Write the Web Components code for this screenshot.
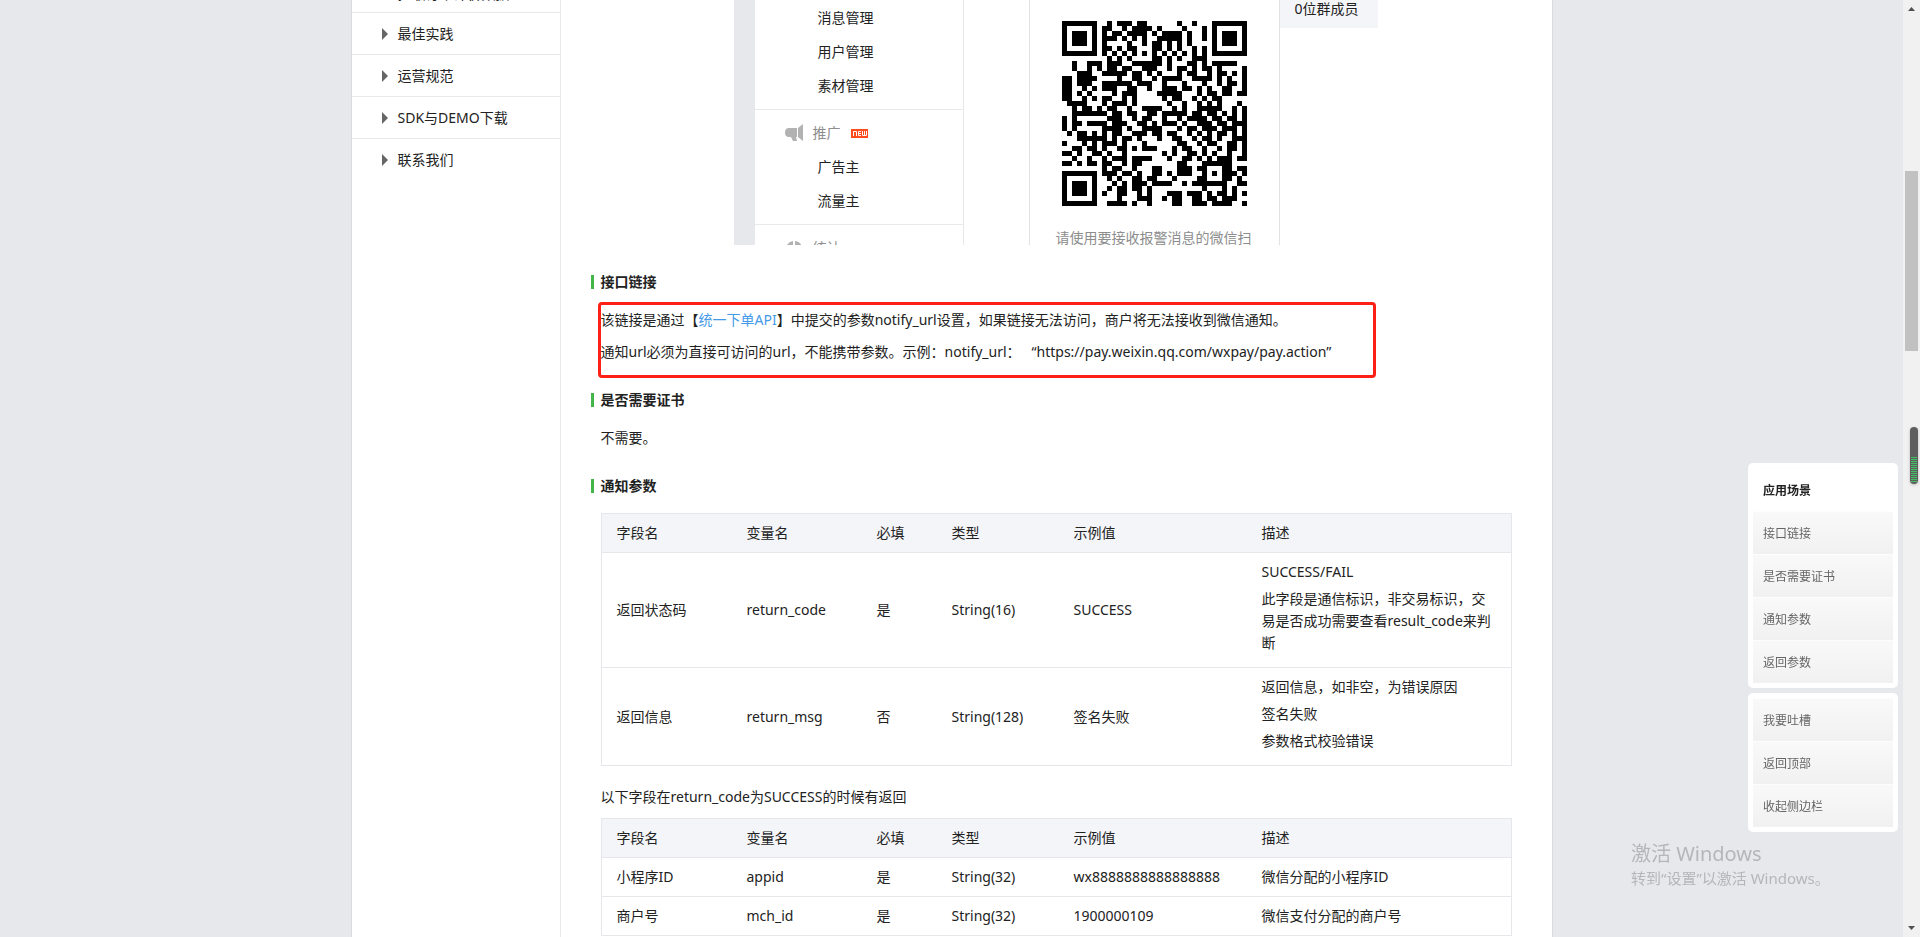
<!DOCTYPE html>
<html lang="zh-CN">
<head>
<meta charset="utf-8">
<title>支付结果通知</title>
<style>
body { margin: 0; background: #e7e8eb; color: #222; font: 14px/22px "Noto Sans", "Noto Sans CJK SC", sans-serif; }
</style>
</head>
<body>
<doc-page></doc-page>
<script>
function define(name, html, setup) {
  const tpl = document.createElement('template');
  tpl.innerHTML = html;
  customElements.define(name, class extends HTMLElement {
    connectedCallback() {
      if (this.shadowRoot) return;
      const root = this.attachShadow({ mode: 'open' });
      root.append(tpl.content.cloneNode(true));
      if (setup) setup(root, this);
    }
  });
}

define('nav-item', `
<style>
:host { display: block; border-bottom: 1px solid #e7e8eb; }
:host([last]) { border-bottom: 0; }
a { display: flex; box-sizing: border-box; align-items: center; gap: 10px; height: 41px; padding-left: 30px; color: #222; text-decoration: none; }
svg { flex: none; width: 6px; height: 12px; fill: #666; }
:host([leaf]) a { padding-top: 4px; }
:host([leaf]) svg { visibility: hidden; }
</style>
<a href="#"><svg viewBox="0 0 6 12"><path d="M0 0L6 6L0 12z"/></svg><slot></slot></a>`);

define('side-nav', `
<style>
:host { display: block; box-sizing: border-box; flex: none; width: 209px; border-right: 1px solid #e7e8eb; }
nav { margin-top: -29px; }
</style>
<nav>
  <nav-item leaf>拉取订单评价数据</nav-item>
  <nav-item>最佳实践</nav-item>
  <nav-item>运营规范</nav-item>
  <nav-item>SDK与DEMO下载</nav-item>
  <nav-item last>联系我们</nav-item>
</nav>`);

define('qr-code', `
<style>
:host { display: block; width: 185px; height: 185px; }
svg { display: block; width: 100%; height: 100%; }
</style>
<svg viewBox="0 0 37 37" shape-rendering="crispEdges" role="img" aria-label="二维码"><path/></svg>`, root => {
  const rows = [
    '#######..#.###.##......#..#...#######',
    '#.....#.##..#.####.#....#...#.#.....#',
    '#.###.#.#.##.####.#.####.#..#.#.###.#',
    '#.###.#.###.#.#.#..#####.#..#.#.###.#',
    '#.###.#.#....#..#.##.#.#.#....#.###.#',
    '#.....#.##.#.##...##.#.#..#.#.#.....#',
    '#######.#.#.#.#.#.#.#.#.#.#.#.#######',
    '.........#.#.#....##.#.#..###........',
    '..#..###.###..######.#...##.#.#####..',
    '..#..#.#.##.##..###..#.##.#.##.#....#',
    '...###..#####.##.#.#...#.##..#.##.#.#',
    '##.####....#..##..#.####..####.#.#..#',
    '##.###..######.###..#...#...#..#.##.#',
    '##..#.#.###..##..#..###.##.#.#..##..#',
    '##.#.#....#.###....#####...#.##.##.##',
    '##..#.#.##..#.#.....#.##..#.#.##.....',
    '.####...#.###.#......#..#..#.#.#...#.',
    '..#.##.#.##..#..####..#.#..#####..#.#',
    '..#######.##.##..##.#####.##.##.#.#.#',
    '#.#......###..#.##..#..#.####.##.##.#',
    '#.##.####.###..##.#.###.#..###.##.###',
    '#.#.....####.#..####...#.##.###.###.#',
    '.#.##.#.#.##..###.##.##..#.#.#.##.#.#',
    '...######.#.##.#...#..##..#.##.#..###',
    '#...#.#.###.#...#......##..#.##..##.#',
    '..##.##.#..##.#.###...#.##..#..#.##.#',
    '##.#..##.#..#.......#.#..##.#.#..#..#',
    '..#..#..#.###.####...#..##.#.#.###.##',
    '##.#.##.##..#.##.......##...######...',
    '........#.##..#...##...###.##...##.##',
    '#######.###.##.#..##.#.###..#.#.###.#',
    '#.....#..#.#..##.##...#....##...##.#.',
    '#.###.#...#.#.###.####..#.#######..##',
    '#.###.#..#.##.##.#..........#...#.#..',
    '#.###.#.#..##..#.#...###.###.#.##.#.#',
    '#.....#....#...###..#.##..##.##.###..',
    '#######..####.#..#....##..###.####..#'
  ];
  let d = '';
  rows.forEach((row, y) => [...row].forEach((c, x) => { if (c === '#') d += 'M' + x + ' ' + y + 'h1v1h-1z'; }));
  root.querySelector('path').setAttribute('d', d);
});

define('console-menu', `
<style>
:host { display: block; box-sizing: border-box; width: 210px; border: solid #e7e8eb; border-width: 0 1px; }
section { border-bottom: 1px solid #e7e8eb; padding-bottom: 6px; }
section:first-child { padding: 4px 0 6px; }
section:last-child { border: 0; }
ul { margin: 0; padding: 0; list-style: none; }
a { display: block; padding-left: 63px; line-height: 34px; color: #222; text-decoration: none; }
h4 { display: flex; align-items: center; margin: 0; padding: 6px 0 0 30px; font-weight: 400; color: #8d8d8d; line-height: 34px; height: 34px; }
h4 svg { width: 18px; height: 18px; margin-right: 10px; fill: #b2b2b2; }
.new { margin-left: 10px; width: 17px; height: 9px; background: #ff4c1c; }
.new svg { display: block; width: 17px; height: 9px; margin: 0; fill: none; stroke: #fff; }
:host { padding-top: 1px; }
</style>
<section><a href="#">消息管理</a><a href="#">用户管理</a><a href="#">素材管理</a></section>
<section>
  <h4><svg viewBox="0 0 18 18"><path d="M4 4h8v9h-1l1 4H8l-2-4H4Q0 13 0 8.500Q0 4 4 4zM13 4l5-4v17l-5-4z"/></svg>推广
  <span class="new"><svg viewBox="0 0 17 9"><path d="M2.500 7V2.500H5.500V7M10 2.500H7.500V6.500H10M7.500 4.500H10M11.500 2V6.500H15.500V2M13.500 2V6.500"/></svg></span></h4>
  <a href="#">广告主</a><a href="#">流量主</a>
</section>
<section><h4><svg viewBox="0 0 18 18"><path d="M8 2v7h9a8 8 0 1 1-9-7zM10 2a8 8 0 0 1 7 6h-7z"/></svg>统计</h4></section>`);

define('console-shot', `
<style>
:host { display: flex; height: 245px; overflow: hidden; }
.gutter { flex: none; width: 20px; background: #e7e8eb; }
console-menu { flex: none; }
.scan { box-sizing: border-box; flex: none; width: 251px; margin-left: 65px; padding: 21px 0 0 32px; border: solid #e0e1e4; border-width: 0 1px; color: #8d8d8d; height: 245px; }
.scan p { margin: 21px 0 0 -6px; white-space: nowrap; }
.group { flex: none; width: 98px; height: 28px; background: #f4f5f9; }
.group p { margin: 0; padding-left: 15px; line-height: 18px; }
</style>
<div class="gutter"></div>
<console-menu></console-menu>
<div class="scan"><qr-code></qr-code><p>请使用要接收报警消息的微信扫</p></div>
<div class="group"><p>0位群成员</p></div>`);

define('section-title', `
<style>
:host { display: block; }
h3 { display: flex; align-items: center; gap: 7px; margin: 0 0 0 -10px; font-size: 14px; line-height: 22px; font-weight: 700; }
h3::before { content: ""; width: 3px; height: 14px; background: #44b549; }
</style>
<h3><slot></slot></h3>`);

define('param-table', `
<style>
:host { display: block; }
table { width: 100%; table-layout: fixed; border-collapse: separate; border-spacing: 0; border: 1px solid #e7e7eb; border-bottom: 0; }
th, td { padding: 8px 15px; text-align: left; font-weight: 400; border-bottom: 1px solid #e7e7eb; vertical-align: middle; line-height: 22px; }
th { background: #f4f5f9; }
p { margin: 0 0 5px; }
.c1, .c2 { width: 130px; } .c3 { width: 75px; } .c4 { width: 122px; } .c5 { width: 188px; }
</style>
<table>
<colgroup><col class="c1"><col class="c2"><col class="c3"><col class="c4"><col class="c5"><col></colgroup>
<thead><tr><th>字段名</th><th>变量名</th><th>必填</th><th>类型</th><th>示例值</th><th>描述</th></tr></thead>
<tbody></tbody>
</table>`, (root, host) => {
  const sets = {
    status: [
      ['返回状态码', 'return_code', '是', 'String(16)', 'SUCCESS', ['SUCCESS/FAIL', '此字段是通信标识，非交易标识，交易是否成功需要查看result_code来判断']],
      ['返回信息', 'return_msg', '否', 'String(128)', '签名失败', ['返回信息，如非空，为错误原因', '签名失败', '参数格式校验错误']]
    ],
    result: [
      ['小程序ID', 'appid', '是', 'String(32)', 'wx8888888888888888', '微信分配的小程序ID'],
      ['商户号', 'mch_id', '是', 'String(32)', '1900000109', '微信支付分配的商户号']
    ]
  };
  root.querySelector('tbody').innerHTML = sets[host.getAttribute('data')].map(r => '<tr>' + r.map(c =>
    '<td>' + (Array.isArray(c) ? c.map(t => '<p>' + t + '</p>').join('') : c) + '</td>').join('') + '</tr>').join('');
});

define('doc-article', `
<style>
:host { display: block; flex: 1; min-width: 0; padding: 0 40px; }
console-shot { margin-left: 133px; }
section-title { margin-top: 26px; }
.notice { box-sizing: border-box; width: 778px; max-width: 100%; height: 76px; margin: 9px 0 0 -3px; border: 3px solid #ff2015; border-radius: 4px; }
.notice p { margin: 0 0 2px; line-height: 30px; }
a { color: #459ae9; text-decoration: none; }
.after { margin-top: 11px; }
.text { margin: 16px 0 0; }
param-table { margin-top: 16px; }
.lead { margin: 20px 0 0; }
.lead + param-table { margin-top: 10px; }
</style>
<console-shot></console-shot>
<section-title>接口链接</section-title>
<div class="notice">
<p>该链接是通过【<a href="#">统一下单API</a>】中提交的参数notify_url设置，如果链接无法访问，商户将无法接收到微信通知。</p>
<p>通知url必须为直接可访问的url，不能携带参数。示例：notify_url：&nbsp;&nbsp; “https://pay.weixin.qq.com/wxpay/pay.action”</p>
</div>
<section-title class="after">是否需要证书</section-title>
<p class="text">不需要。</p>
<section-title>通知参数</section-title>
<param-table data="status"></param-table>
<p class="lead">以下字段在return_code为SUCCESS的时候有返回</p>
<param-table data="result"></param-table>`);

define('side-panel', `
<style>
:host { display: block; box-sizing: border-box; width: 150px; padding: 5px; background: #fff; border-radius: 5px; }
::slotted(a) { display: block; box-sizing: border-box; height: 43px; padding-left: 10px; border-top: 1px solid #fdfdfd; background: linear-gradient(#f9f9f9, #f1f1f1); color: #666; font-size: 12px; line-height: 44px; text-decoration: none; }
::slotted(a.current) { background: #fff; color: #222; font-weight: 700; }
</style>
<slot></slot>`);

define('os-watermark', `
<style>
:host { display: block; color: #b5b6b9; }
strong, span { display: block; font-weight: 400; white-space: nowrap; }
strong { font-size: 20px; line-height: 26px; }
span { font-size: 15px; line-height: 22px; }
</style>
<strong>激活 Windows</strong><span>转到“设置”以激活 Windows。</span>`);

define('scroll-rail', `
<style>
:host { display: grid; grid-template-rows: 17px 154fr 180fr 569fr 17px; flex: none; width: 17px; background: #f1f1f1; }
.thumb { grid-row: 3; margin: 0 2px; background: #c1c1c1; }
svg { width: 17px; height: 17px; fill: #505050; }
.down { grid-row: 5; }
</style>
<svg viewBox="0 0 17 17"><path d="M5 11L8.500 7L12 11z"/></svg>
<div class="thumb"></div>
<svg class="down" viewBox="0 0 17 17"><path d="M5 6L8.500 10L12 6z"/></svg>`);

define('level-meter', `
<style>
:host { display: block; box-sizing: border-box; width: 8px; height: 57px; padding: 30px 1px 2px; background: #5e5e5e; border-radius: 4px; box-shadow: 0 1px 3px #bbb; }
div { height: 100%; background: repeating-linear-gradient(#41c163 0 1px, #5e5e5e 1px 2px); }
</style>
<div></div>`);

define('doc-page', `
<style>
:host { display: flex; height: 100vh; overflow: hidden; }
.view { flex: 1; min-width: 0; overflow: hidden; }
main { display: flex; box-sizing: border-box; max-width: 1202px; min-height: 100%; margin: 0 auto; background: #fff; border: solid #d9dadc; border-width: 0 1px; }
.float { position: fixed; right: 22px; bottom: 105px; display: grid; gap: 5px; }
os-watermark { position: fixed; right: 91px; bottom: 48px; width: 198px; }
level-meter { position: fixed; right: 2px; top: 427px; }
</style>
<div class="view"><main><side-nav></side-nav><doc-article></doc-article></main></div>
<scroll-rail></scroll-rail>
<os-watermark></os-watermark>
<div class="float">
<side-panel><a class="current" href="#">应用场景</a><a href="#">接口链接</a><a href="#">是否需要证书</a><a href="#">通知参数</a><a href="#">返回参数</a></side-panel>
<side-panel><a href="#">我要吐槽</a><a href="#">返回顶部</a><a href="#">收起侧边栏</a></side-panel>
</div>
<level-meter></level-meter>`);
</script>
</body>
</html>
